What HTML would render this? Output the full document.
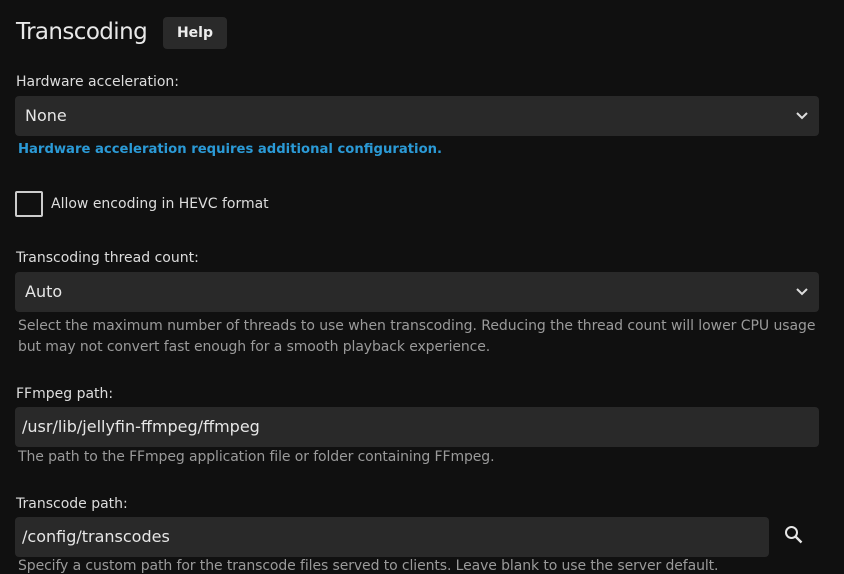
<!DOCTYPE html>
<html><head><style>
body{margin:0;background:#101010;width:844px;height:569px;overflow:hidden;font-family:"DejaVu Sans","Liberation Sans",sans-serif;color:#ddd;position:relative}
.a{position:absolute;white-space:nowrap}
.lbl{font-size:14px;color:#ddd}
.box{position:absolute;left:15px;width:804px;height:40px;background:#292929;border-radius:4px}
.box span{position:absolute;left:10px;top:10px;font-size:16px;color:#e6e6e6}
.help{font-size:14px;color:#9a9a9a;letter-spacing:-0.1px}
.chev{position:absolute;right:10px;top:15px}
</style></head><body>
<div class="a" style="left:16px;top:19px;font-size:23px;letter-spacing:-0.6px;color:#e8e8e8">Transcoding</div>
<div class="a" style="left:163px;top:17px;width:64px;height:32px;background:#2a2a2a;border-radius:4px;font-size:14px;font-weight:bold;color:#eee;text-align:center;line-height:33px">Help</div>
<div class="a lbl" style="left:16px;top:74px">Hardware acceleration:</div>
<div class="box" style="top:96px"><span>None</span><svg class="chev" width="14" height="10" viewBox="0 0 14 10"><path d="M2 2l5 5 5-5" stroke="#ddd" stroke-width="2" fill="none"/></svg></div>
<div class="a" style="left:18px;top:142px;font-size:13.2px;font-weight:bold;color:#2b9ad6">Hardware acceleration requires additional configuration.</div>
<div class="a" style="left:15px;top:191px;width:24px;height:22px;border:2px solid #ccc;border-radius:2px"></div>
<div class="a lbl" style="left:51px;top:196px">Allow encoding in HEVC format</div>
<div class="a lbl" style="left:16px;top:250px">Transcoding thread count:</div>
<div class="box" style="top:272px"><span>Auto</span><svg class="chev" width="14" height="10" viewBox="0 0 14 10"><path d="M2 2l5 5 5-5" stroke="#ddd" stroke-width="2" fill="none"/></svg></div>
<div class="a help" style="left:18px;top:318px;letter-spacing:-0.05px">Select the maximum number of threads to use when transcoding. Reducing the thread count will lower CPU usage</div>
<div class="a help" style="left:18px;top:339px">but may not convert fast enough for a smooth playback experience.</div>
<div class="a lbl" style="left:16px;top:386px">FFmpeg path:</div>
<div class="box" style="top:407px"><span style="left:7px">/usr/lib/jellyfin-ffmpeg/ffmpeg</span></div>
<div class="a help" style="left:18px;top:449px">The path to the FFmpeg application file or folder containing FFmpeg.</div>
<div class="a lbl" style="left:16px;top:496px">Transcode path:</div>
<div class="box" style="top:517px;width:754px"><span style="left:7px">/config/transcodes</span></div>
<svg class="a" style="left:783px;top:524px" width="22" height="22" viewBox="0 0 22 22"><circle cx="8.5" cy="8.5" r="5.5" stroke="#e6e6e6" stroke-width="2" fill="none"/><path d="M12.5 12.5l6 6" stroke="#e6e6e6" stroke-width="2.4"/></svg>
<div class="a help" style="left:18px;top:558px">Specify a custom path for the transcode files served to clients. Leave blank to use the server default.</div>
</body></html>
